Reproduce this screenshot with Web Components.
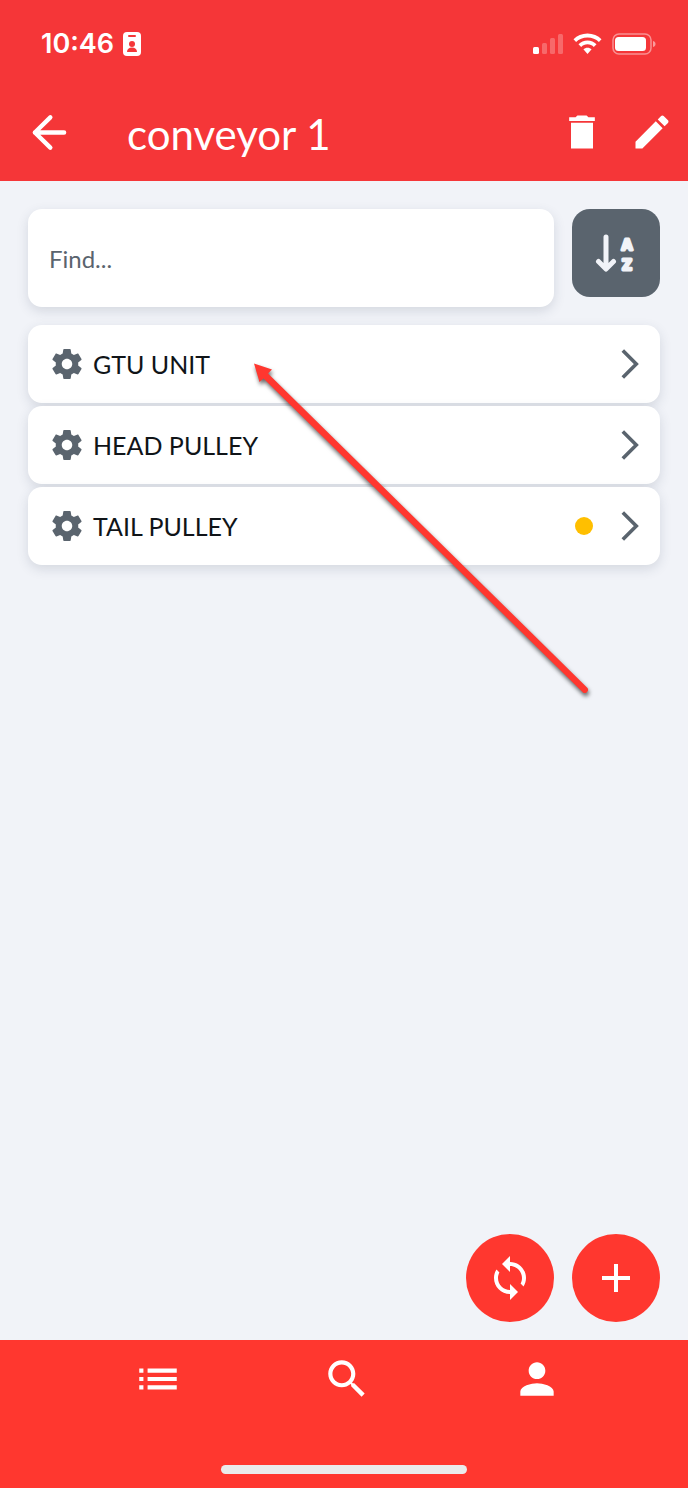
<!DOCTYPE html>
<html lang="en">
<head>
<meta charset="utf-8">
<meta name="viewport" content="width=device-width, initial-scale=1">
<title>conveyor 1</title>
<style>
    body {
        margin: 0;
        font-family: Lato, "Liberation Sans", sans-serif;
        background-color: #f1f3f8;
    }
</style>
</head>
<body>
<app-shell>
    <status-bar slot="top" time="10:46"></status-bar>
    <app-toolbar slot="top">conveyor 1</app-toolbar>
    <search-row></search-row>
    <item-list>
        <item-row>GTU UNIT</item-row>
        <item-row>HEAD PULLEY</item-row>
        <item-row warning>TAIL PULLEY</item-row>
    </item-list>
    <pointer-arrow></pointer-arrow>
    <fab-group></fab-group>
    <tab-bar slot="bottom"></tab-bar>
</app-shell>

<script>
const icons = {
    back: `<path d="M3 12h18M12.500 2.700L3 12l9.500 9.300" fill="none" stroke="currentColor" stroke-width="2.7" stroke-linecap="round" stroke-linejoin="round"/>`,
    trash: `<path d="M6 21h12V7H6v14zM19 4h-3.5l-1-1h-5l-1 1H5v2h14V4z"/>`,
    pencil: `<path d="M3 17.25V21h3.75L17.81 9.94l-3.75-3.75L3 17.25zM20.71 7.04c.39-.39.39-1.02 0-1.41l-2.34-2.34c-.39-.39-1.02-.39-1.41 0l-1.83 1.83 3.75 3.75 1.83-1.83z"/>`,
    gear: `<path d="M19.43 12.98c.04-.32.07-.64.07-.98s-.03-.66-.07-.98l2.11-1.65c.19-.15.24-.42.12-.64l-2-3.46c-.12-.22-.39-.3-.61-.22l-2.49 1c-.52-.4-1.08-.73-1.69-.98l-.38-2.65C14.46 2.18 14.25 2 14 2h-4c-.25 0-.46.18-.49.42l-.38 2.65c-.61.25-1.17.59-1.69.98l-2.49-1c-.23-.09-.49 0-.61.22l-2 3.46c-.13.22-.07.49.12.64l2.11 1.65c-.04.32-.07.65-.07.98s.03.66.07.98l-2.11 1.65c-.19.15-.24.42-.12.64l2 3.46c.12.22.39.3.61.22l2.49-1c.52.4 1.08.73 1.69.98l.38 2.65c.03.24.24.42.49.42h4c.25 0 .46-.18.49-.42l.38-2.65c.61-.25 1.17-.59 1.69-.98l2.49 1c.23.09.49 0 .61-.22l2-3.46c.12-.22.07-.49-.12-.64l-2.11-1.65zM12 15.5c-1.93 0-3.5-1.57-3.5-3.5s1.57-3.5 3.5-3.5 3.5 1.57 3.5 3.5-1.57 3.5-3.5 3.5z"/>`,
    chevron: `<path d="M7.2 3l9 9-9 9" fill="none" stroke="currentColor" stroke-width="2.4"/>`,
    sync: `<path d="M12 4V1L8 5l4 4V6c3.31 0 6 2.69 6 6 0 1.01-.25 1.97-.7 2.8l1.46 1.46C19.54 15.03 20 13.57 20 12c0-4.42-3.58-8-8-8zm0 14c-3.31 0-6-2.69-6-6 0-1.01.25-1.97.7-2.8L5.24 7.74C4.46 8.97 4 10.43 4 12c0 4.42 3.58 8 8 8v3l4-4-4-4v3z"/>`,
    plus: `<path d="M19 13h-6v6h-2v-6H5v-2h6V5h2v6h6v2z"/>`,
    list: `<path d="M3 13h2v-2H3v2zm0 4h2v-2H3v2zm0-8h2V7H3v2zm4 4h14v-2H7v2zm0 4h14v-2H7v2zM7 7v2h14V7H7z"/>`,
    search: `<path d="M15.5 14h-.79l-.28-.27C15.41 12.59 16 11.11 16 9.5 16 5.91 13.09 3 9.5 3S3 5.91 3 9.5 5.91 16 9.5 16c1.61 0 3.09-.59 4.23-1.57l.27.28v.79l5 4.99L20.49 19l-4.99-5zm-6 0C7.01 14 5 11.99 5 9.5S7.01 5 9.5 5 14 7.01 14 9.5 11.99 14 9.5 14z"/>`,
    person: `<path d="M12 12c2.21 0 4-1.79 4-4s-1.79-4-4-4-4 1.79-4 4 1.79 4 4 4zm0 2c-2.67 0-8 1.34-8 4v2h16v-2c0-2.66-5.33-4-8-4z"/>`
};

class AppIcon extends HTMLElement {

    constructor() {
        super();
        this.shadowDOM = this.attachShadow({ mode: "open" });
    }

    connectedCallback() {
        this.shadowDOM.innerHTML = `
        <style>
            :host {
                display: block;
                flex: none;
                width: var(--icon-size, 48px);
                height: var(--icon-size, 48px);
            }
            svg {
                display: block;
                width: 100%;
                height: 100%;
                fill: currentColor;
            }
        </style>
        <svg viewBox="0 0 24 24" aria-hidden="true">${icons[this.getAttribute("name")]}</svg>
        `
    }
}

class AppShell extends HTMLElement {

    constructor() {
        super();
        this.shadowDOM = this.attachShadow({ mode: "open" });
    }

    connectedCallback() {
        this.shadowDOM.innerHTML = `
        <style>
            :host {
                display: flex;
                flex-direction: column;
                min-height: 100vh;
            }
            header {
                background-color: #f53638;
                color: white;
            }
            main {
                position: relative;
                flex: 1;
                display: flex;
                flex-direction: column;
                gap: 18px;
                padding: 28px 28px 18px;
            }
        </style>
        <header><slot name="top"></slot></header>
        <main><slot></slot></main>
        <slot name="bottom"></slot>
        `
    }
}

class StatusBar extends HTMLElement {

    constructor() {
        super();
        this.shadowDOM = this.attachShadow({ mode: "open" });
    }

    connectedCallback() {
        this.shadowDOM.innerHTML = `
        <style>
            :host {
                display: flex;
                align-items: center;
                gap: 9px;
                height: 88px;
                padding: 0 32px 0 41px;
                box-sizing: border-box;
            }
            time {
                font: 600 27px/32px Inter, "Liberation Sans", sans-serif;
            }
            svg {
                display: block;
                fill: white;
            }
            .signal {
                margin-left: auto;
            }
        </style>
        <time>${this.getAttribute("time")}</time>
        <svg width="18" height="24" viewBox="0 0 18 24" aria-hidden="true">
            <rect width="18" height="24" rx="4"/>
            <g fill="#f53638">
                <rect x="5" y="3" width="8" height="2" rx="1"/>
                <circle cx="9" cy="12" r="3"/>
                <path d="M4 20c0-3 2-4.500 5-4.500s5 1.500 5 4.500z"/>
            </g>
        </svg>
        <svg class="signal" width="31" height="22" viewBox="0 0 31 22" aria-hidden="true">
            <rect x="0" y="14" width="6" height="7" rx="1.500"/>
            <g opacity=".25">
                <rect x="9" y="10" width="5" height="11" rx="1.500"/>
                <rect x="17" y="5" width="5" height="16" rx="1.500"/>
                <rect x="25" y="1" width="5" height="20" rx="1.500"/>
            </g>
        </svg>
        <svg width="29" height="22" viewBox="0 0 29 22" aria-hidden="true">
            <path d="M14.500 0.500C9 .5 4 2.700.5 6.200l2.600 2.700C6 6 10 4.400 14.500 4.400S23 6 25.900 8.900l2.600-2.700C25 2.700 20 .5 14.500.5z"/>
            <path d="M14.500 7.500c-3.500 0-6.700 1.400-9 3.700l2.700 2.700c1.600-1.600 3.800-2.600 6.300-2.600s4.700 1 6.300 2.600l2.700-2.700c-2.300-2.300-5.500-3.700-9-3.700z"/>
            <path d="M14.500 14.700c-1.600 0-3 .6-4.100 1.600l4.100 4.700 4.100-4.700c-1.100-1-2.500-1.600-4.100-1.600z"/>
        </svg>
        <svg width="45" height="22" viewBox="0 0 45 22" aria-hidden="true">
            <rect x="2" y="1" width="38" height="20" rx="6" fill="none" stroke="white" stroke-width="1.500" opacity=".45"/>
            <rect x="4" y="4" width="31" height="14" rx="3.500"/>
            <path d="M42 8c2 .6 2.500 1.800 2.500 3s-.5 2.400-2.500 3z" opacity=".5"/>
        </svg>
        `
    }
}

class AppToolbar extends HTMLElement {

    constructor() {
        super();
        this.shadowDOM = this.attachShadow({ mode: "open" });
    }

    connectedCallback() {
        this.shadowDOM.innerHTML = `
        <style>
            :host {
                display: flex;
                align-items: center;
                height: 93px;
                padding: 0 14px 5px 30px;
                box-sizing: border-box;
            }
            h1 {
                flex: 1;
                margin: 0 0 0 58px;
                padding-top: 4px;
                font-size: 42px;
                line-height: 50px;
                font-weight: 400;
            }
            button {
                padding: 0;
                border: 0;
                background: none;
                color: inherit;
                cursor: pointer;
                --icon-size: 44px;
            }
            button.back {
                --icon-size: 39px;
            }
            .actions {
                display: flex;
                gap: 26px;
            }
        </style>
        <button class="back" aria-label="Back"><app-icon name="back"></app-icon></button>
        <h1><slot></slot></h1>
        <div class="actions">
            <button aria-label="Delete"><app-icon name="trash"></app-icon></button>
            <button aria-label="Edit"><app-icon name="pencil"></app-icon></button>
        </div>
        `
    }
}

class SearchRow extends HTMLElement {

    constructor() {
        super();
        this.shadowDOM = this.attachShadow({ mode: "open" });
    }

    connectedCallback() {
        this.shadowDOM.innerHTML = `
        <style>
            :host {
                display: flex;
                align-items: flex-start;
                gap: 18px;
            }
            input {
                flex: 1;
                min-width: 0;
                height: 98px;
                padding: 0 21px;
                box-sizing: border-box;
                border: 0;
                border-radius: 14px;
                background-color: white;
                box-shadow: 0 4px 12px rgba(50, 60, 90, 0.15);
                font: inherit;
                font-size: 24px;
                color: #101418;
            }
            input::placeholder {
                color: #5a646e;
                opacity: 1;
            }
            button {
                display: grid;
                place-items: center;
                width: 88px;
                height: 88px;
                padding: 0;
                border: 0;
                border-radius: 18px;
                background-color: #5a646e;
                color: #f1f3f8;
                cursor: pointer;
            }
            svg text {
                font: 700 15px Inter, sans-serif;
                fill: currentColor;
                stroke: currentColor;
                stroke-width: 3;
                stroke-linejoin: round;
                text-anchor: middle;
            }
        </style>
        <input type="search" placeholder="Find..." aria-label="Find">
        <button aria-label="Sort by name">
            <svg width="44" height="40" viewBox="0 0 44 40" aria-hidden="true">
                <path d="M12 4v31M4.500 28.500L12 36l7.500-7.500" fill="none" stroke="currentColor" stroke-width="5" stroke-linecap="round" stroke-linejoin="round"/>
                <text x="33" y="17">A</text>
                <text x="33" y="37">Z</text>
            </svg>
        </button>
        `
    }
}

class ItemList extends HTMLElement {

    constructor() {
        super();
        this.shadowDOM = this.attachShadow({ mode: "open" });
    }

    connectedCallback() {
        this.setAttribute("role", "list");
        this.shadowDOM.innerHTML = `
        <style>
            :host {
                display: flex;
                flex-direction: column;
                gap: 3px;
            }
        </style>
        <slot></slot>
        `
    }
}

class ItemRow extends HTMLElement {

    constructor() {
        super();
        this.shadowDOM = this.attachShadow({ mode: "open" });
    }

    connectedCallback() {
        this.setAttribute("role", "listitem");
        this.shadowDOM.innerHTML = `
        <style>
            :host {
                display: block;
            }
            a {
                display: flex;
                align-items: center;
                height: 78px;
                padding: 0 12px 0 21px;
                box-sizing: border-box;
                border-radius: 14px;
                background-color: white;
                box-shadow: 0 4px 12px rgba(50, 60, 90, 0.15);
                color: #101418;
                font-size: 25px;
                line-height: 32px;
                text-decoration: none;
                --icon-size: 36px;
            }
            app-icon {
                color: #5a646e;
            }
            .label {
                flex: 1;
                margin-left: 8px;
            }
            .dot {
                width: 18px;
                height: 18px;
                margin-right: 19px;
                border-radius: 50%;
                background-color: #ffbf00;
            }
        </style>
        <a href="#">
            <app-icon name="gear"></app-icon>
            <span class="label"><slot></slot></span>
            ${this.hasAttribute("warning") ? `<span class="dot"></span>` : ""}
            <app-icon name="chevron"></app-icon>
        </a>
        `
    }
}

// annotation lying over the list
class PointerArrow extends HTMLElement {

    constructor() {
        super();
        this.shadowDOM = this.attachShadow({ mode: "open" });
    }

    connectedCallback() {
        this.shadowDOM.innerHTML = `
        <style>
            :host {
                position: absolute;
                left: 244px;
                top: 172px;
                pointer-events: none;
            }
            svg {
                display: block;
                fill: #ff372f;
                filter: drop-shadow(1px 3px 2px rgba(0, 0, 0, 0.6));
            }
        </style>
        <svg width="356" height="352" viewBox="0 0 356 352" aria-hidden="true">
            <path d="M10 10.500L28 16.500L24 20.500L343 334.500a3 3 0 0 1-4.500 4.500L19.500 25.500L15.500 29z"/>
        </svg>
        `
    }
}

class FabGroup extends HTMLElement {

    constructor() {
        super();
        this.shadowDOM = this.attachShadow({ mode: "open" });
    }

    connectedCallback() {
        this.shadowDOM.innerHTML = `
        <style>
            :host {
                display: flex;
                justify-content: flex-end;
                gap: 18px;
                margin-top: auto;
            }
            button {
                display: grid;
                place-items: center;
                width: 88px;
                height: 88px;
                padding: 0;
                border: 0;
                border-radius: 50%;
                background-color: #ff372f;
                color: white;
                cursor: pointer;
            }
        </style>
        <button aria-label="Sync"><app-icon name="sync"></app-icon></button>
        <button aria-label="Add"><app-icon name="plus"></app-icon></button>
        `
    }
}

class TabBar extends HTMLElement {

    constructor() {
        super();
        this.shadowDOM = this.attachShadow({ mode: "open" });
    }

    connectedCallback() {
        this.shadowDOM.innerHTML = `
        <style>
            :host {
                display: block;
                padding: 14px 0;
                background-color: #ff372f;
                color: white;
            }
            nav {
                display: grid;
                grid-template-columns: repeat(3, 1fr);
                justify-items: center;
                padding: 0 56px 0 63px;
                --icon-size: 50px;
            }
            a {
                color: inherit;
            }
            .home {
                width: 246px;
                height: 9px;
                margin: 61px auto 0;
                border-radius: 5px;
                background-color: #ebebeb;
            }
        </style>
        <nav>
            <a href="#" aria-label="List"><app-icon name="list"></app-icon></a>
            <a href="#" aria-label="Search"><app-icon name="search"></app-icon></a>
            <a href="#" aria-label="Profile"><app-icon name="person"></app-icon></a>
        </nav>
        <div class="home"></div>
        `
    }
}

customElements.define("app-icon", AppIcon);
customElements.define("app-shell", AppShell);
customElements.define("status-bar", StatusBar);
customElements.define("app-toolbar", AppToolbar);
customElements.define("search-row", SearchRow);
customElements.define("item-list", ItemList);
customElements.define("item-row", ItemRow);
customElements.define("pointer-arrow", PointerArrow);
customElements.define("fab-group", FabGroup);
customElements.define("tab-bar", TabBar);
</script>
</body>
</html>
